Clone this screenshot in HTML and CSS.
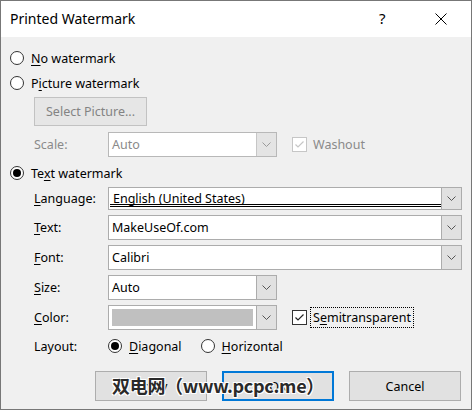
FILE: index.html
```html
<!DOCTYPE html>
<html>
<head>
<meta charset="utf-8">
<link rel="stylesheet" href="styles.css">
</head>
<body>
<div class="window">
  <div class="titlebar">
    <span class="title">Printed Watermark</span>
    <span class="help">?</span>
    <span class="close">
      <svg width="12" height="12" viewBox="0 0 12 12"><path d="M0.5 0.5 L11.5 11.5 M11.5 0.5 L0.5 11.5" stroke="#000" stroke-width="1" fill="none"/></svg>
    </span>
  </div>
  <div class="content">
    <div class="row r-no">
      <span class="radio"></span><span class="lbl"><u>N</u>o watermark</span>
    </div>
    <div class="row r-pic">
      <span class="radio"></span><span class="lbl">P<u>i</u>cture watermark</span>
    </div>
    <div class="btn btn-select disabled">Select Picture...</div>
    <div class="row r-scale">
      <span class="field-label disabled-text">Scale:</span>
      <div class="combo combo-small disabled-combo">
        <span class="combo-text disabled-text">Auto</span>
        <span class="drop"><svg width="9" height="5" viewBox="0 0 9 5"><path d="M0.5 0.5 L4.5 4.5 L8.5 0.5" stroke="#9a9a9a" fill="none"/></svg></span>
      </div>
      <span class="check disabled-check"><svg width="13" height="13" viewBox="0 0 13 13"><path d="M2.5 6.5 L5 9 L10.5 3.5" stroke="#c6c6c6" stroke-width="1.2" fill="none"/></svg></span>
      <span class="check-lbl disabled-text">Washout</span>
    </div>
    <div class="row r-text">
      <span class="radio on"></span><span class="lbl">Te<u>x</u>t watermark</span>
    </div>
    <div class="grid">
      <span class="field-label"><u>L</u>anguage:</span>
      <div class="combo combo-lang">
        <span class="combo-text lang-text">English (United States)</span>
        <span class="drop"><svg width="9" height="5" viewBox="0 0 9 5"><path d="M0.5 0.5 L4.5 4.5 L8.5 0.5" stroke="#555" fill="none"/></svg></span>
      </div>
      <span class="field-label"><u>T</u>ext:</span>
      <div class="combo">
        <span class="combo-text">MakeUseOf.com</span>
        <span class="drop"><svg width="9" height="5" viewBox="0 0 9 5"><path d="M0.5 0.5 L4.5 4.5 L8.5 0.5" stroke="#555" fill="none"/></svg></span>
      </div>
      <span class="field-label"><u>F</u>ont:</span>
      <div class="combo">
        <span class="combo-text">Calibri</span>
        <span class="drop"><svg width="9" height="5" viewBox="0 0 9 5"><path d="M0.5 0.5 L4.5 4.5 L8.5 0.5" stroke="#555" fill="none"/></svg></span>
      </div>
      <span class="field-label"><u>S</u>ize:</span>
      <div class="inline-row">
        <div class="combo combo-small">
          <span class="combo-text">Auto</span>
          <span class="drop"><svg width="9" height="5" viewBox="0 0 9 5"><path d="M0.5 0.5 L4.5 4.5 L8.5 0.5" stroke="#555" fill="none"/></svg></span>
        </div>
      </div>
      <span class="field-label"><u>C</u>olor:</span>
      <div class="inline-row">
        <div class="combo combo-small">
          <span class="swatch"></span>
          <span class="drop"><svg width="9" height="5" viewBox="0 0 9 5"><path d="M0.5 0.5 L4.5 4.5 L8.5 0.5" stroke="#555" fill="none"/></svg></span>
        </div>
        <span class="check"><svg width="13" height="13" viewBox="0 0 13 13"><path d="M2.5 6.5 L5 9 L10.5 3.5" stroke="#222" stroke-width="1.2" fill="none"/></svg></span>
        <span class="check-lbl focus">S<u>e</u>mitransparent</span>
      </div>
    </div>
    <div class="row r-layout">
      <span class="field-label">Layout:</span>
      <span class="radio on"></span><span class="lbl"><u>D</u>iagonal</span>
      <span class="radio r-h"></span><span class="lbl"><u>H</u>orizontal</span>
    </div>
    <div class="buttons">
      <div class="btn dlg-btn">Apply</div>
      <div class="btn dlg-btn default">OK</div>
      <div class="btn dlg-btn">Cancel</div>
    </div>
    <div class="stamp">双电网（www.pcpc.me）</div>
  </div>
</div>
</body>
</html>
```

FILE: styles.css
```css
* { box-sizing: border-box; }
html, body { margin: 0; padding: 0; }
body {
  width: 472px;
  height: 410px;
  overflow: hidden;
  font-family: "Segoe UI", "Noto Sans", "Liberation Sans", sans-serif;
  font-size: 12.5px;
  color: #000;
}
.window {
  width: 472px;
  height: 410px;
  border: 1px solid #777;
  background: #f0f0f0;
  display: flex;
  flex-direction: column;
}
.titlebar {
  height: 36px;
  background: #fff;
  display: flex;
  align-items: center;
  padding-left: 9px;
  flex: none;
}
.title {
  font-size: 14px;
  flex: 1;
  padding-bottom: 2px;
}
.help {
  font-size: 15px;
  width: 12px;
  margin-right: 44px;
  padding-bottom: 2px;
}
.close {
  width: 12px;
  height: 12px;
  margin-right: 24px;
  display: flex;
}
.content {
  position: relative;
  flex: 1;
  padding: 0 9px 0 9px;
  display: flex;
  flex-direction: column;
}
.row {
  display: flex;
  align-items: center;
  height: 20px;
}
.r-no { margin-top: 11px; }
.r-pic { margin-top: 5px; }
.radio {
  width: 14px;
  height: 14px;
  border: 1px solid #333;
  border-radius: 50%;
  background: #fff;
  flex: none;
  display: flex;
  align-items: center;
  justify-content: center;
}
.radio.on::after {
  content: "";
  width: 8px;
  height: 8px;
  border-radius: 50%;
  background: #000;
}
.lbl { margin-left: 7px; white-space: nowrap; }
u { text-decoration-thickness: 1px; text-underline-offset: 2px; }
.btn {
  display: flex;
  align-items: center;
  justify-content: center;
  background: #e1e1e1;
  border: 1px solid #adadad;
  white-space: nowrap;
}
.btn-select {
  margin-top: 4px;
  margin-left: 24px;
  width: 113px;
  height: 29px;
  background: #e6e6e6;
  border-color: #c2c2c2;
  color: #838383;
}
.r-scale {
  margin-top: 6px;
  height: 25px;
}
.field-label {
  width: 74px;
  flex: none;
  white-space: nowrap;
}
.r-scale .field-label, .r-layout .field-label { margin-left: 24px; }
.disabled-text { color: #8a8a8a; }
.combo {
  height: 100%;
  border: 1px solid #acacac;
  background: #fff;
  display: flex;
  align-items: stretch;
  position: relative;
}
.combo-text {
  flex: 1;
  padding-left: 3px;
  display: flex;
  align-items: center;
  white-space: nowrap;
}
.drop {
  width: 20px;
  flex: none;
  background: #e1e1e1;
  border-left: 1px solid #acacac;
  display: flex;
  align-items: center;
  justify-content: center;
}
.combo-small { width: 169px; }
.disabled-combo { border-color: #b8b8b8; }
.disabled-combo .drop { border-left-color: #c6c6c6; background: #e4e4e4; }
.check {
  width: 15px;
  height: 15px;
  border: 1px solid #333;
  background: #fff;
  margin-left: 15px;
  flex: none;
  display: flex;
  align-items: center;
  justify-content: center;
}
.disabled-check { border-color: #c6c6c6; }
.check-lbl { margin-left: 6px; white-space: nowrap; }
.focus {
  outline: 1px dotted #000;
  outline-offset: 1px;
  margin-left: 5px;
  padding: 0 1px;
}
.r-text { margin-top: 6px; }
.grid {
  margin-top: 4px;
  margin-left: 24px;
  display: grid;
  grid-template-columns: 74px 354px;
  grid-template-rows: 23px 25px 25px 25px 25px;
  row-gap: 5px;
  align-items: center;
}
.grid .field-label { width: auto; }
.grid .combo { height: 100%; }
.inline-row {
  display: flex;
  align-items: center;
  height: 25px;
}
.lang-text {
  align-items: flex-start;
  padding-top: 1px;
  margin: 1px 0 2px 1px;
  border-bottom: 3px double #000;
}
.swatch {
  flex: 1;
  margin: 3px 3px 3px 3px;
  background: #c0c0c0;
}
.r-layout { margin-top: 6px; }
.r-layout .r-h { margin-left: 19px; }
.buttons {
  margin-top: 15px;
  display: flex;
  justify-content: flex-end;
  gap: 15px;
  padding-right: 1px;
}
.dlg-btn {
  width: 112px;
  height: 30px;
}
.dlg-btn.default { border: 2px solid #0078d7; }
.stamp {
  position: absolute;
  left: 111px;
  top: 335px;
  font-family: "Noto Sans CJK SC", "Noto Sans", sans-serif;
  font-size: 18px;
  font-weight: bold;
  letter-spacing: -0.3px;
  color: #2a2a2a;
  white-space: nowrap;
  text-shadow: 1px 1px 0 #fff, -1px -1px 0 #fff, 1px -1px 0 #fff, -1px 1px 0 #fff;
}
```
